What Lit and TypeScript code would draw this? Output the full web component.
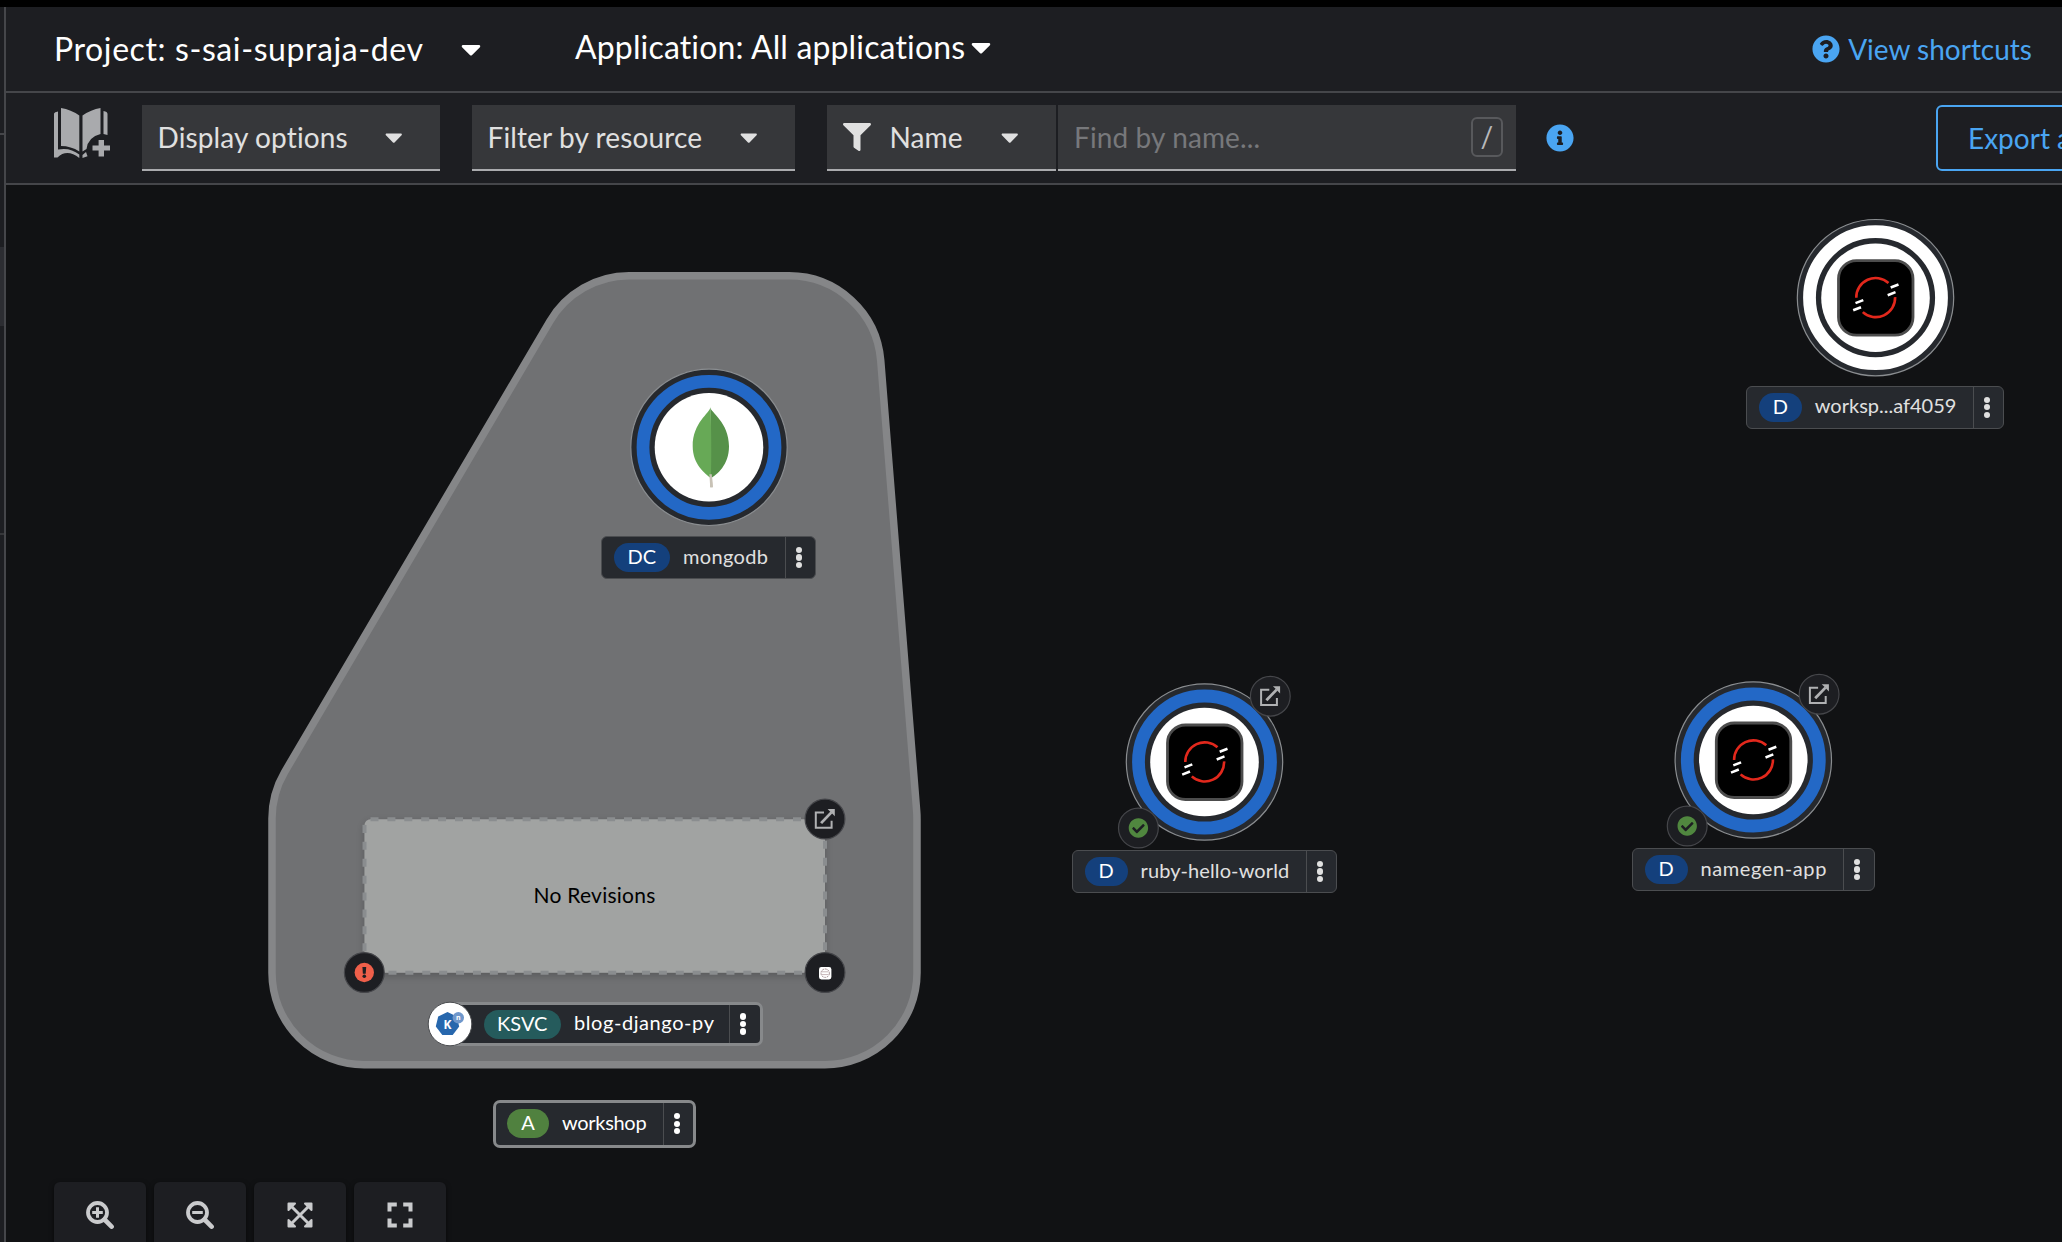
import { LitElement, html, svg, css } from "lit";
import { customElement, property } from "lit/decorators.js";

const CARET =
  "M31.3 192h257.3c17.8 0 26.7 21.5 14.1 34.1L174.1 354.8c-7.8 7.8-20.5 7.8-28.3 0L17.2 226.1C4.6 213.5 13.5 192 31.3 192z";
const FILTER =
  "M487.976 0H24.028C2.71 0-8.047 25.866 7.058 40.971L192 225.941V432c0 7.831 3.821 15.17 10.237 19.662l80 55.98C298.02 518.69 320 507.493 320 487.98V225.941l184.947-184.97C520.021 25.896 509.338 0 487.976 0z";
const INFO =
  "M256 8C119.043 8 8 119.083 8 256c0 136.997 111.043 248 248 248s248-111.003 248-248C504 119.083 392.957 8 256 8zm0 110c23.196 0 42 18.804 42 42s-18.804 42-42 42-42-18.804-42-42 18.804-42 42-42zm56 254c0 6.627-5.373 12-12 12h-88c-6.627 0-12-5.373-12-12v-24c0-6.627 5.373-12 12-12h12v-64h-12c-6.627 0-12-5.373-12-12v-24c0-6.627 5.373-12 12-12h64c6.627 0 12 5.373 12 12v100h12c6.627 0 12 5.373 12 12v24z";
const QUESTION =
  "M504 256c0 136.997-111.043 248-248 248S8 392.997 8 256C8 119.083 119.043 8 256 8s248 111.083 248 248zM262.655 90c-54.497 0-89.255 22.957-116.549 63.758-3.536 5.286-2.353 12.415 2.715 16.258l34.699 26.31c5.205 3.947 12.621 3.008 16.665-2.122 17.864-22.658 30.113-35.797 57.303-35.797 20.429 0 45.698 13.148 45.698 32.958 0 14.976-12.363 22.667-32.534 33.976C247.128 238.528 216 254.941 216 296v4c0 6.627 5.373 12 12 12h56c6.627 0 12-5.373 12-12v-1.333c0-28.462 83.186-29.647 83.186-106.667 0-58.002-60.165-102-116.531-102zM256 338c-25.365 0-46 20.635-46 46 0 25.364 20.635 46 46 46s46-20.636 46-46c0-25.365-20.635-46-46-46z";
const CHECK =
  "M504 256c0 136.967-111.033 248-248 248S8 392.967 8 256 119.033 8 256 8s248 111.033 248 248zM227.314 387.314l184-184c6.248-6.248 6.248-16.379 0-22.627l-22.627-22.627c-6.248-6.249-16.379-6.249-22.628 0L216 308.118l-70.059-70.059c-6.248-6.248-16.379-6.248-22.628 0l-22.627 22.627c-6.248 6.248-6.248 16.379 0 22.627l104 104c6.249 6.249 16.379 6.249 22.628.001z";

const caret = (size: number) => html`<svg
  width=${(size * 320) / 512}
  height=${size}
  viewBox="0 0 320 512"
  fill="currentColor"
>
  <path d=${CARET}></path>
</svg>`;

const glyph = (d: string, size: number) => html`<svg
  width=${size}
  height=${size}
  viewBox="0 0 512 512"
  fill="currentColor"
>
  <path d=${d}></path>
</svg>`;

interface Workload {
  x: number;
  y: number;
  ring: string;
  icon: "mongo" | "openshift";
  decorated: boolean;
}

interface NodeLabel {
  kind: string;
  name: string;
  x: number;
  y: number;
  width: number;
  badge: number;
  tone: "blue" | "teal" | "green";
  spacing: number;
  group?: boolean;
  lead?: boolean;
}

const WORKLOADS: Workload[] = [
  { x: 1875.5, y: 297.7, ring: "#ffffff", icon: "openshift", decorated: false },
  { x: 709, y: 447.3, ring: "#2368c6", icon: "mongo", decorated: false },
  { x: 1204.5, y: 762, ring: "#2368c6", icon: "openshift", decorated: true },
  { x: 1753.3, y: 760, ring: "#2368c6", icon: "openshift", decorated: true },
];

const LABELS: NodeLabel[] = [
  { kind: "D", name: "worksp...af4059", x: 1746.3, y: 386, width: 258, badge: 43, tone: "blue", spacing: 0 },
  { kind: "DC", name: "mongodb", x: 601.4, y: 536.4, width: 215, badge: 56, tone: "blue", spacing: 0.35 },
  { kind: "D", name: "ruby-hello-world", x: 1072, y: 850.4, width: 265, badge: 43, tone: "blue", spacing: 0.1 },
  { kind: "D", name: "namegen-app", x: 1632, y: 848.4, width: 242.5, badge: 43, tone: "blue", spacing: 0.6 },
  { kind: "KSVC", name: "blog-django-py", x: 448.5, y: 1002, width: 314, badge: 77.5, tone: "teal", spacing: 0.58, group: true, lead: true },
  { kind: "A", name: "workshop", x: 493, y: 1100, width: 203, badge: 42, tone: "green", spacing: -0.3, group: true },
];

const ORIGIN_X = 6;
const ORIGIN_Y = 185;

const openshiftIcon = svg`
  <rect x="-37" y="-37" width="74.5" height="74.5" rx="18" fill="#000" stroke="#4c4c4c" stroke-width="2.8"></rect>
  <g fill="none" stroke="#e2281c" stroke-width="2.6">
    <path d="M-19.2 0A19.3 19.3 0 0 1 13 -14.7"></path>
    <path d="M19.6 -.6A19.3 19.3 0 0 1 -12.7 14.4"></path>
  </g>
  <g stroke="#fff" stroke-width="2.6">
    <path d="M15.2 -10.2L23 -13.2M12.2 -2.5L20 -5.6M-20 5.4L-12.2 2.4M-22.3 12.6L-14.5 9.5"></path>
  </g>`;

const mongoIcon = svg`
  <path d="M1.2 27h1.6l1 13h-2.6z" fill="#b9b2a2"></path>
  <path d="M1.3 -40C1.5 -35 20 -25 20 -1C20 18 8 27 1.9 31z" fill="#569149"></path>
  <path d="M1.3 -40C1 -34 -16.3 -25 -16.3 -1C-16.3 17 -4 26 1.9 31C2.6 10 2.4 -20 1.3 -40z" fill="#67a956"></path>
  <path d="M1.6 27l.8 13" stroke="#c8c2b6" stroke-width="2.4"></path>`;

const openBadge = (x: number, y: number) => svg`
  <g transform="translate(${x} ${y})">
    <circle r="19.9" fill="#1d1e22" stroke="#45464a" stroke-width="1.2"></circle>
    <path d="M-1 -6.4H-9.2V8.7H6.6V1.8" fill="none" stroke="#b0b1b3" stroke-width="2"></path>
    <path d="M-3.9 4.1L6.4 -6.6" stroke="#b0b1b3" stroke-width="2.8"></path>
    <path d="M2.6 -10H9.8V-2.8L7.4 -5.2L5 -7.6z" fill="#b0b1b3"></path>
  </g>`;

const checkBadge = (x: number, y: number) => svg`
  <g transform="translate(${x} ${y})">
    <circle r="19.9" fill="#1d1e22" stroke="#45464a" stroke-width="1.2"></circle>
    <g transform="translate(-10 -10) scale(.0391)"><path d=${CHECK} fill="#50873f"></path></g>
  </g>`;

const workload = (n: Workload) => svg`
  <g transform="translate(${n.x} ${n.y})">
    <circle r="78.2" fill="#26292e" stroke="#8a8d90" stroke-width="1.2"></circle>
    <circle r="66" fill="none" stroke=${n.ring} stroke-width="12.8"></circle>
    <circle r="54.3" fill="#fff"></circle>
    ${n.icon === "mongo" ? mongoIcon : openshiftIcon}
  </g>
  ${n.decorated ? [openBadge(n.x + 65.8, n.y - 65.8), checkBadge(n.x - 66.1, n.y + 66)] : null}`;

@customElement("node-label")
export class NodeLabelElement extends LitElement {
  @property({ attribute: false }) data!: NodeLabel;

  static styles = css`
    :host {
      display: block;
    }
    .pill {
      box-sizing: border-box;
      display: flex;
      align-items: stretch;
      height: 42.5px;
      border: 1.5px solid #4b4d50;
      border-radius: 6px;
      background: #26292e;
      color: #e0e0e0;
      font-size: 20px;
      line-height: 27px;
      white-space: nowrap;
      font-variant-ligatures: none;
    }
    .pill.group {
      height: 44px;
      border: 3px solid #87898b;
      border-radius: 7px;
      color: #fff;
    }
    .pill.tall {
      height: 47.5px;
    }
    .body {
      flex: 1;
      display: flex;
      align-items: center;
      gap: 13px;
      padding-left: 11.5px;
    }
    .tall .body {
      padding-left: 11px;
    }
    .lead .body {
      padding-left: 32px;
    }
    .kind {
      height: 29px;
      border-radius: 15px;
      text-align: center;
      color: #fff;
    }
    .name {
      padding-bottom: 3px;
    }
    .blue {
      background: #14407c;
    }
    .teal {
      background: #255b5c;
    }
    .green {
      background: #50813f;
    }
    .menu {
      box-sizing: border-box;
      width: 30.5px;
      border-left: 1px solid #4b4d50;
      display: flex;
      flex-direction: column;
      align-items: center;
      justify-content: center;
      gap: 1.2px;
      padding-right: 3px;
    }
    .dot {
      width: 6.3px;
      height: 6.3px;
      border-radius: 50%;
      background: currentColor;
    }
  `;

  render() {
    const d = this.data;
    const cls = `pill ${d.group ? "group" : ""} ${d.lead ? "lead" : d.group ? "tall" : ""}`;
    return html`<div class=${cls} style="width:${d.width}px">
      <div class="body">
        <span class="kind ${d.tone}" style="width:${d.badge}px">${d.kind}</span>
        <span class="name" style="letter-spacing:${d.spacing}px">${d.name}</span>
      </div>
      <div class="menu">
        <span class="dot"></span><span class="dot"></span><span class="dot"></span>
      </div>
    </div>`;
  }
}

@customElement("topology-canvas")
export class TopologyCanvas extends LitElement {
  static styles = css`
    :host {
      display: block;
      position: relative;
      overflow: hidden;
      background: #111214;
    }
    .graph {
      display: block;
    }
    .empty {
      letter-spacing: 0.25px;
    }
    .place {
      position: absolute;
    }
    .controls {
      position: absolute;
      left: 48px;
      top: 997px;
      display: flex;
      gap: 8px;
    }
    .control {
      width: 92px;
      height: 66px;
      display: flex;
      align-items: center;
      justify-content: center;
      border-radius: 6px;
      background: #1d1e22;
      box-shadow: 0 2px 5px rgba(0, 0, 0, 0.6);
    }
  `;

  render() {
    return html`
      <svg class="graph" width="2056" height="1057" viewBox="6 185 2056 1057" font-family="Lato, sans-serif">
        <defs>
          <filter id="soft" x="-10%" y="-10%" width="120%" height="130%">
            <feDropShadow dx="0" dy="3" stdDeviation="4" flood-color="#000" flood-opacity=".22"></feDropShadow>
          </filter>
        </defs>
        <path
          d="M272 819A92 92 0 0 1 284.6 772.1L549.8 321.3A92 92 0 0 1 629 275.8H789A92 92 0 0 1 880.7 360.3L916.7 811.3Q917 815 917 819V973A92 92 0 0 1 825 1064.7H364A92 92 0 0 1 272 973Z"
          fill="#707173"
          stroke="#858688"
          stroke-width="7.5"
        ></path>
        <rect x="364.5" y="819.3" width="460.5" height="153.5" rx="6" fill="#a1a3a2" filter="url(#soft)"></rect>
        <rect
          x="364.5"
          y="819.3"
          width="460.5"
          height="153.5"
          rx="6"
          fill="none"
          stroke="#8a8d8f"
          stroke-width="4"
          stroke-dasharray="8 8.9"
        ></rect>
        <text class="empty" x="594.5" y="902.5" font-size="21" text-anchor="middle" fill="#000">No Revisions</text>
        ${openBadge(825, 819)}
        <circle cx="364.3" cy="972.5" r="19.9" fill="#1d1e22" stroke="#45464a" stroke-width="1.2"></circle>
        <circle cx="364.3" cy="972.5" r="9.7" fill="#ef5f4a"></circle>
        <path d="M362.4 967h3.8l-.5 6.8h-2.8z" fill="#1d1e22"></path>
        <circle cx="364.3" cy="976.3" r="1.8" fill="#1d1e22"></circle>
        <circle cx="825" cy="972.5" r="19.9" fill="#1d1e22" stroke="#45464a" stroke-width="1.2"></circle>
        <rect x="819" y="967" width="12.4" height="12.4" rx="2.4" fill="#fff"></rect>
        <circle cx="825.2" cy="973.2" r="4.2" fill="none" stroke="#8e7478" stroke-width=".8" stroke-dasharray="2 .7"></circle>
        <path d="M822 971.8h6.4M822 974.6h6.4" stroke="#b09a9c" stroke-width=".7"></path>
        ${WORKLOADS.map(workload)}
      </svg>

      ${LABELS.map(
        (l) => html`<node-label
          class="place"
          style="left:${l.x - ORIGIN_X}px;top:${l.y - ORIGIN_Y}px"
          .data=${l}
        ></node-label>`
      )}

      <svg
        class="place"
        style="left:${426.5 - ORIGIN_X}px;top:${1000.7 - ORIGIN_Y}px"
        width="46"
        height="46"
        viewBox="-23 -23 46 46"
        font-family="Open Sans, sans-serif"
        font-weight="700"
        fill="#fff"
        text-anchor="middle"
      >
        <circle r="21.8" stroke="#4b4d50" stroke-width="1"></circle>
        <path d="M-2.5 -12L6.8 -7.5L9.2 2.5L2.7 11H-7.7L-14.2 2.5L-11.8 -7.5Z" fill="#2767ad"></path>
        <circle cx="8.3" cy="-6.3" r="5.7" fill="#6f97cb"></circle>
        <text x="-2.6" y="4.9" font-size="12">K</text>
        <text x="8.3" y="-3.8" font-size="7">n</text>
      </svg>

      <div class="controls">
        <div class="control">
          <svg width="28" height="28" viewBox="0 0 28 28" fill="none" stroke="#cacbcd">
            <circle cx="11.5" cy="11.5" r="9.5" stroke-width="3.8"></circle>
            <path d="M18.5 18.5L25.6 25.6" stroke-width="4.6" stroke-linecap="round"></path>
            <path d="M6.2 11.5H16.8M11.5 6.2V16.8" stroke-width="3"></path>
          </svg>
        </div>
        <div class="control">
          <svg width="28" height="28" viewBox="0 0 28 28" fill="none" stroke="#cacbcd">
            <circle cx="11.5" cy="11.5" r="9.5" stroke-width="3.8"></circle>
            <path d="M18.5 18.5L25.6 25.6" stroke-width="4.6" stroke-linecap="round"></path>
            <path d="M6.2 11.5H16.8" stroke-width="3"></path>
          </svg>
        </div>
        <div class="control">
          <svg width="26" height="26" viewBox="0 0 26 26" fill="#cacbcd" stroke="#cacbcd" stroke-linejoin="round">
            <path d="M4 4L22 22M22 4L4 22" stroke-width="3"></path>
            <path d="M1.5 1.5H8L1.5 8ZM24.5 1.5V8L18 1.5ZM24.5 24.5H18L24.5 18ZM1.5 24.5V18L8 24.5Z" stroke-width="2"></path>
          </svg>
        </div>
        <div class="control">
          <svg width="26" height="26" viewBox="0 0 26 26" fill="none" stroke="#cacbcd" stroke-width="4">
            <path d="M2.5 9.5V2.5H9.8M16.2 2.5H23.5V9.5M23.5 16.5V23.5H16.2M9.8 23.5H2.5V16.5"></path>
          </svg>
        </div>
      </div>
    `;
  }
}

@customElement("app-root")
export class AppRoot extends LitElement {
  static styles = css`
    :host {
      display: grid;
      grid-template-columns: 4px minmax(0, 1fr);
      width: 2062px;
      height: 1242px;
      box-sizing: border-box;
      border-top: 7px solid #000;
      overflow: hidden;
      background: #1d1e22;
      color: #fff;
      font-family: Lato, "Open Sans", sans-serif;
      font-variant-ligatures: none;
    }
    svg {
      display: block;
      flex: none;
    }
    .rail {
      display: flex;
      flex-direction: column;
    }
    .rail-head {
      height: 126px;
      border-bottom: 2px solid #45464a;
    }
    .rail-gap {
      height: 112px;
    }
    .rail-active {
      height: 79px;
      background: #2c2d32;
    }
    .rail-foot {
      height: 207px;
      border-bottom: 2px solid #36373a;
    }
    .page {
      border-left: 2px solid #45464a;
      display: grid;
      grid-template-rows: 86px 92px minmax(0, 1fr);
      overflow: hidden;
    }
    .bar {
      box-sizing: border-box;
      display: flex;
      align-items: center;
      padding-left: 48px;
      border-bottom: 2px solid #45464a;
      white-space: nowrap;
      overflow: hidden;
    }
    .picker {
      display: flex;
      align-items: center;
      font-size: 32px;
      line-height: 40px;
    }
    .project {
      width: 369px;
      letter-spacing: 0.6px;
    }
    .project-caret {
      margin: 0 94px 0 38px;
    }
    .application {
      padding-bottom: 5px;
      gap: 7px;
    }
    .app-text {
      width: 389px;
      letter-spacing: 0.15px;
    }
    .shortcuts {
      margin-left: auto;
      margin-right: 30px;
      display: flex;
      align-items: center;
      gap: 8px;
      color: #4aa5f2;
      font-size: 28px;
      line-height: 36px;
    }
    .toolbar {
      font-size: 28px;
      line-height: 36px;
      color: #e0e0e0;
    }
    .field {
      box-sizing: border-box;
      height: 66px;
      flex: none;
      display: flex;
      align-items: center;
      justify-content: space-between;
      background: #36373a;
      border-bottom: 2px solid #aaabae;
      padding: 0 38px 0 15.5px;
      letter-spacing: 0.12px;
    }
    .quick {
      margin-right: 32px;
    }
    .display {
      width: 298px;
      margin-right: 32px;
    }
    .resource {
      width: 323px;
      margin-right: 32px;
    }
    .by {
      width: 229px;
      margin-right: 2px;
      padding-left: 16px;
    }
    .by-text {
      display: flex;
      align-items: center;
      gap: 18.5px;
    }
    .find {
      width: 458px;
      padding: 0 13px 0 16px;
      color: #77787b;
    }
    .key {
      box-sizing: border-box;
      width: 32px;
      height: 40px;
      border: 2px solid #58595c;
      border-radius: 6px;
      color: #b8b9bb;
      text-align: center;
      line-height: 34px;
    }
    .info {
      margin-left: 30px;
      color: #4aa5f2;
    }
    .export {
      box-sizing: border-box;
      flex: none;
      margin-left: 362px;
      width: 300px;
      height: 66px;
      padding-left: 30px;
      border: 2px solid #4aa5f2;
      border-radius: 6px;
      color: #4aa5f2;
      line-height: 62px;
    }
  `;

  render() {
    return html`
      <div class="rail">
        <div class="rail-head"></div>
        <div class="rail-gap"></div>
        <div class="rail-active"></div>
        <div class="rail-foot"></div>
      </div>
      <div class="page">
        <div class="bar">
          <div class="picker">
            <span class="project">Project: s-sai-supraja-dev</span>
            <span class="project-caret">${caret(32)}</span>
          </div>
          <div class="picker application">
            <span class="app-text">Application: All applications</span>
            ${caret(32)}
          </div>
          <div class="shortcuts">${glyph(QUESTION, 28)}<span>View shortcuts</span></div>
        </div>

        <div class="bar toolbar">
          <svg class="quick" width="56" height="64" viewBox="54 106 56 64" fill="#a9aaad">
            <path d="M61 108Q71 109.500 79.300 115.500V151.500Q71 146 61 146Z"></path>
            <path d="M82.500 115.500Q91 109.500 100.500 108V134Q88 137 86.500 149L82.500 151.500Z"></path>
            <path d="M58 111.500V149.500Q70 147 79.300 154.500V158Q67 148.500 57.500 157.500H54V113.500Q54.500 111.800 58 111.500Z"></path>
            <path d="M103.500 111Q107.500 111.500 107.500 114V135L103.500 134Z"></path>
            <path d="M82.500 155L86 152L87.500 156.200L82.500 158Z"></path>
            <path d="M98.600 140H104V145.500H110V150.500H104V156.500H98.600V150.500H92.500V145.500H98.600Z"></path>
          </svg>
          <div class="field display"><span>Display options</span>${caret(28)}</div>
          <div class="field resource"><span>Filter by resource</span>${caret(28)}</div>
          <div class="field by">
            <span class="by-text">${glyph(FILTER, 28)}<span>Name</span></span>${caret(28)}
          </div>
          <div class="field find"><span>Find by name...</span><span class="key">/</span></div>
          <span class="info">${glyph(INFO, 28)}</span>
          <div class="export">Export application</div>
        </div>

        <topology-canvas></topology-canvas>
      </div>
    `;
  }
}
